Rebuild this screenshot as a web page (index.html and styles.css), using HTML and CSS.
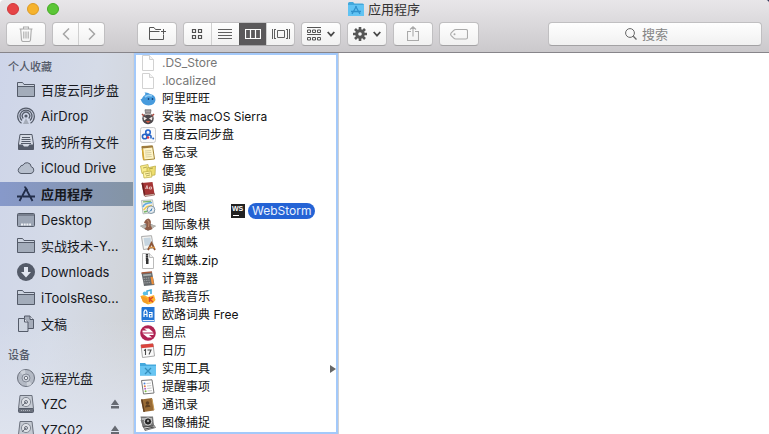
FILE: index.html
```html
<!DOCTYPE html>
<html lang="zh-CN">
<head>
<meta charset="utf-8">
<title>应用程序</title>
<link rel="stylesheet" href="styles.css">
</head>
<body>
<svg class="symbols" aria-hidden="true">
  <symbol id="folder" viewBox="0 0 18 16"><path d="M.5 14.500V.5H5.500L7 2.500H17.500V14.500Z" fill="#a3acba" stroke="#545b69"/><path d="M1 1H5.300L6.800 3H17V4H1Z" fill="#ccd3df"/><path d="M.5 4.500H17.500" stroke="#545b69"/></symbol>
  <symbol id="drive" viewBox="0 0 18 18"><path d="M3 .5H15L16.500 13.500H1.500Z" fill="#c5cad3" stroke="#6b717d"/><circle cx="9" cy="7" r="4.600" fill="#dde0e6" stroke="#848a95"/><circle cx="9" cy="7" r="1.500" fill="none" stroke="#6b717d"/><path d="M9 7L5 11" stroke="#6b717d"/><rect x="1.500" y="13.500" width="15" height="4" rx="1" fill="#6b717d" stroke="#545b69"/><path d="M4 15.500H14" stroke="#aeb3bd" stroke-dasharray="1 1"/></symbol>
  <symbol id="eject" viewBox="0 0 8 10"><path d="M4 .5L8 6H0ZM0 7H8V9.500H0Z" fill="#666a72"/></symbol>
  <symbol id="page" viewBox="0 0 16 16"><path d="M2.500 .5H9.500L13.500 4.500V15.500H2.500Z" fill="#fff" stroke="#d2d2d2"/><path d="M9.500 .5V4.500H13.500" fill="#f4f4f4" stroke="#d2d2d2"/></symbol>
  <symbol id="chevron" viewBox="0 0 8 6"><path d="M.7 1L4 4.600L7.300 1" fill="none" stroke="#4a4a4a" stroke-width="1.800"/></symbol>
</svg>
<div class="window">
  <header class="toolbar">
    <div class="titlebar">
      <div class="lights">
        <button class="light close" aria-label="关闭"></button>
        <button class="light minimize" aria-label="最小化"></button>
        <button class="light expand" aria-label="缩放"></button>
      </div>
      <h1 class="title">
        <svg width="16" height="14" viewBox="0 0 16 14"><path d="M0 1.500Q0 0 1.500 0H5L6.500 1.500H14.500Q16 1.500 16 3V14H0Z" fill="#42a8dc"/><rect y="3" width="16" height="11" fill="#61c3f3"/><path d="M4 12L8.500 4M7.500 4L12 12M3 9.500H13" fill="none" stroke="#2f91cc" stroke-width="1.300"/></svg>
        应用程序
      </h1>
    </div>
    <div class="tools">
      <button class="tool" aria-label="删除"><svg width="14" height="16" viewBox="0 0 14 16"><path d="M.5 3H13.500M4.500 3V1H9.500V3M1.700 3L2.500 14Q2.700 15.500 4.200 15.500H9.800Q11.300 15.500 11.500 14L12.300 3M4.800 5.500V12.500M7 5.500V12.500M9.200 5.500V12.500" fill="none" stroke="#aaa" stroke-width="1.100"/></svg></button>
      <div class="group nav">
        <button class="segment" aria-label="后退"><svg width="8" height="12" viewBox="0 0 8 12"><path d="M7 .5L1.500 6L7 11.500" fill="none" stroke="#a5a5a5" stroke-width="1.500"/></svg></button>
        <button class="segment" aria-label="前进"><svg width="8" height="12" viewBox="0 0 8 12"><path d="M1 .5L6.500 6L1 11.500" fill="none" stroke="#a5a5a5" stroke-width="1.500"/></svg></button>
      </div>
      <button class="tool new-folder" aria-label="新建文件夹"><svg width="18" height="14" viewBox="0 0 18 14"><path d="M13 2.500H7.500L6 .5H1.500V12.500H15.500V8M1.500 4.500H11.500M15.500 2V7.500M13 4.500H18" fill="none" stroke="#555"/></svg></button>
      <div class="group views">
        <button class="segment" aria-label="图标"><svg width="12" height="12" viewBox="0 0 12 12"><path d="M1.500 1.500H4.500V4.500H1.500ZM7.500 1.500H10.500V4.500H7.500ZM1.500 7.500H4.500V10.500H1.500ZM7.500 7.500H10.500V10.500H7.500Z" fill="none" stroke="#505050" stroke-width="1.200"/></svg></button>
        <button class="segment" aria-label="列表"><svg width="14" height="12" viewBox="0 0 14 12"><path d="M0 1.500H14M0 4.500H14M0 7.500H14M0 10.500H14" stroke="#606060"/></svg></button>
        <button class="segment active" aria-label="分栏" aria-pressed="true"><svg width="16" height="12" viewBox="0 0 16 12"><path d="M.5 1.500H15.500V10.500H.5ZM5.500 1.500V10.500M10.500 1.500V10.500" fill="none" stroke="#fff" stroke-width="1.200"/></svg></button>
        <button class="segment" aria-label="封面"><svg width="18" height="12" viewBox="0 0 18 12"><path d="M.5 1V11M2.500 1V11M5.500 2.500H12.500V9.500H5.500ZM15.500 1V11M17.500 1V11M2.500 1.500H4M2.500 10.500H4M14 1.500H15.500M14 10.500H15.500" fill="none" stroke="#606060"/></svg></button>
      </div>
      <button class="tool menu" aria-label="排列"><svg width="14" height="14" viewBox="0 0 14 14"><path d="M0 .5H14M0 7.500H14M.5 3H3.500V5.500H.5ZM5.500 3H8.500V5.500H5.500ZM10.500 3H13.500V5.500H10.500ZM.5 10.500H3.500V13H.5ZM5.500 10.500H8.500V13H5.500ZM10.500 10.500H13.500V13H10.500Z" fill="none" stroke="#555"/></svg><svg width="8" height="6"><use href="#chevron"/></svg></button>
      <button class="tool menu" aria-label="操作"><svg width="14" height="14" viewBox="0 0 14 14"><path d="M7 0V14M0 7H14M2 2L12 12M12 2L2 12" stroke="#565656" stroke-width="2.600"/><circle cx="7" cy="7" r="4.800" fill="#565656"/><circle cx="7" cy="7" r="1.800" fill="#f7f7f7"/></svg><svg width="8" height="6"><use href="#chevron"/></svg></button>
      <button class="tool" aria-label="共享"><svg width="12" height="16" viewBox="0 0 12 16"><path d="M4 5.500H.5V14.500H11.500V5.500H8M6 10.500V1M3 3.500L6 .8L9 3.500" fill="none" stroke="#aaa" stroke-width="1.100"/></svg></button>
      <button class="tool" aria-label="标记"><svg width="18" height="12" viewBox="0 0 18 12"><path d="M6 1.500H16Q17.500 1.500 17.500 3V9.500Q17.500 11 16 11H6Q4.500 11 3.500 9.800L1 7.300Q.3 6.300 1 5.200L3.500 2.700Q4.500 1.500 6 1.500Z" fill="none" stroke="#aaa" stroke-width="1.100"/><circle cx="4.500" cy="6.200" r="1" fill="#aaa"/></svg></button>
      <label class="search">
        <svg width="12" height="12" viewBox="0 0 12 12"><circle cx="5" cy="5" r="4.400" fill="none" stroke="#666"/><path d="M8.300 8.300L11.500 11.500" stroke="#666" stroke-width="1.300"/></svg>
        <input type="search" placeholder="搜索" aria-label="搜索">
      </label>
    </div>
  </header>
  <div class="content">
    <nav class="sidebar">
      <h2>个人收藏</h2>
      <a href="#"><svg width="18" height="16"><use href="#folder"/></svg><span>百度云同步盘</span></a>
      <a href="#"><svg width="18" height="18" viewBox="0 0 18 18"><g fill="none" stroke="#545b69" stroke-width="1.300"><path d="M4.500 16.300A8.300 8.300 0 1 1 13.500 16.300"/><path d="M5 13.500A6 6 0 1 1 13 13.500"/><path d="M6.300 11.500A3.700 3.700 0 1 1 11.700 11.500"/></g><circle cx="9" cy="9" r="1.600" fill="#545b69"/><path d="M9 11L12 17H6Z" fill="#a5acb9"/></svg><span>AirDrop</span></a>
      <a href="#"><svg width="18" height="16" viewBox="0 0 18 16"><path d="M3 .5H15L16.500 10V15.500H1.500V10Z" fill="#d5dae4" stroke="#545b69"/><path d="M5 3.500H13M4.500 5.500H13.500M4.500 7.500H13.500M4 9.500H14" stroke="#545b69"/><path d="M1.500 10.500H5.500L7 12.500H11L12.500 10.500H16.500V15.500H1.500Z" fill="#545b69"/></svg><span>我的所有文件</span></a>
      <a href="#"><svg width="18" height="14" viewBox="0 0 18 14"><path d="M4 12.500A3.300 3.300 0 0 1 3.200 6.200A2.500 2.500 0 0 1 6 4.200A4.300 4.300 0 0 1 14.200 5.700A3.500 3.500 0 0 1 14 12.500Z" fill="#b7bfcd" stroke="#545b69"/></svg><span>iCloud Drive</span></a>
      <a href="#" class="selected" aria-current="page"><svg width="18" height="16" viewBox="0 0 18 16"><path d="M2.500 15L9.500 2M8.500 2L15.500 15M0 10.500H4M6 10.500H18" fill="none" stroke="#222d49" stroke-width="1.800"/><path d="M7.500 .5L10.500 4.500" stroke="#222d49" stroke-width="1.500"/></svg><span>应用程序</span></a>
      <a href="#"><svg width="18" height="16" viewBox="0 0 18 16"><rect x=".5" y="1.500" width="17" height="13" rx="1" fill="#9ca5b4" stroke="#545b69"/><path d="M1 3H17" stroke="#545b69"/><path d="M4 12.500H14" stroke="#eef1f6" stroke-width="2" stroke-dasharray="2 .7"/></svg><span>Desktop</span></a>
      <a href="#"><svg width="18" height="16"><use href="#folder"/></svg><span>实战技术-Y...</span></a>
      <a href="#"><svg width="18" height="18" viewBox="0 0 18 18"><circle cx="9" cy="9" r="9" fill="#545b69"/><path d="M7 4H11V9H14L9 14.500L4 9H7Z" fill="#e2e7f1"/></svg><span>Downloads</span></a>
      <a href="#"><svg width="18" height="16"><use href="#folder"/></svg><span>iToolsReso...</span></a>
      <a href="#"><svg width="18" height="18" viewBox="0 0 18 18"><path d="M7.500 1H13L16.500 4.500V13.500H7.500Z" fill="#a6adba" stroke="#545b69"/><path d="M13 1V4.500H16.500" fill="#d9deea" stroke="#545b69"/><path d="M1.500 3.500H7.500L11 7V16.500H1.500Z" fill="#ccd3df" stroke="#545b69"/><path d="M7.500 3.500V7H11" fill="#e5e9f1" stroke="#545b69"/></svg><span>文稿</span></a>
      <h2>设备</h2>
      <a href="#"><svg width="18" height="18" viewBox="0 0 18 18"><circle cx="9" cy="9" r="8.500" fill="#b4bac5" stroke="#6b717d"/><path d="M9 9L3 3A8 8 0 0 1 8 1ZM9 9L15 15A8 8 0 0 1 10 17Z" fill="#cdd2da"/><circle cx="9" cy="9" r="4" fill="#cbd0d9" stroke="#858b97"/><circle cx="9" cy="9" r="1.700" fill="#eef0f4" stroke="#6b717d"/></svg><span>远程光盘</span></a>
      <a href="#"><svg width="18" height="18"><use href="#drive"/></svg><span>YZC</span><svg class="eject" width="8" height="10"><use href="#eject"/></svg></a>
      <a href="#"><svg width="18" height="18"><use href="#drive"/></svg><span>YZC02</span><svg class="eject" width="8" height="10"><use href="#eject"/></svg></a>
    </nav>
    <main class="browser">
      <ul class="column">
        <li class="hidden-file"><svg class="icon"><use href="#page"/></svg>.DS_Store</li>
        <li class="hidden-file"><svg class="icon"><use href="#page"/></svg>.localized</li>
        <li><svg class="icon" viewBox="0 0 16 16"><path d="M5 4Q6 2.500 4.500 1.500Q8 1 10 3Q15.500 4 15.500 9Q15 14 8.500 14.500Q2.500 14.500 .5 8Q2 8.500 2.500 6.500Q3.500 4.500 5 4Z" fill="#479bdd"/><path d="M5 6Q8 3.500 12 5" stroke="#93cdf4" stroke-width="1.800" fill="none"/><path d="M8.500 7V9M12.500 7V9" stroke="#174a83" stroke-width="1.400"/></svg>阿里旺旺</li>
        <li><svg class="icon" viewBox="0 0 16 16"><circle cx="8" cy="9.500" r="5.700" fill="#4c474b"/><path d="M5 .8H11L10.500 4H5.500Z" fill="#aaa2a3" stroke="#666" stroke-width=".7"/><path d="M4.500 6Q8 4 11.500 6" stroke="#c7bdba" stroke-width="1.400" fill="none"/><path d="M3.500 7.500L7 9.500L4 11.500ZM12.500 7.500L9 9.500L12 11.500Z" fill="#f0e8e4"/><path d="M5.500 12H10.500L8 14Z" fill="#d65b43"/><path d="M2 5L4 7M14 5L12 7" stroke="#a84c42" stroke-width="1.500"/></svg>安装 macOS Sierra</li>
        <li><svg class="icon" viewBox="0 0 16 16"><rect x=".5" y=".5" width="15" height="15" rx="2" fill="#fafafa" stroke="#ccc"/><circle cx="4.700" cy="9.500" r="2.300" fill="none" stroke="#2464c5" stroke-width="1.600"/><circle cx="8" cy="5.300" r="2.300" fill="none" stroke="#2868ce" stroke-width="1.600"/><path d="M7 9Q9 7 11 9V11.500" fill="none" stroke="#2464c5" stroke-width="1.600"/><circle cx="8" cy="10.500" r="1.300" fill="#d9364c"/><circle cx="13.200" cy="11.500" r="1" fill="#2464c5"/></svg>百度云同步盘</li>
        <li><svg class="icon" viewBox="0 0 16 16"><path d="M2 1.500L12.500 1L14.500 14L3.500 15Z" fill="#fff5c8" stroke="#a18434"/><path d="M1.500 1.500L12.500 .5V2.500L2 3.500Z" fill="#9d793d"/><path d="M5 6L11 5.500M5 8L11.300 7.500M5.300 10L11.500 9.500M5.500 12L11.700 11.500" stroke="#c5bd91" stroke-width=".7"/><path d="M2.500 4L3.800 15" stroke="#d6a832" stroke-width="1.500"/></svg>备忘录</li>
        <li><svg class="icon" viewBox="0 0 16 16"><path d="M.5 3L8 1.500L9 9L2 10.500Z" fill="#f9ec8c" stroke="#b9a942" stroke-width=".7"/><path d="M7 5L15.500 3L15 12L7 13Z" fill="#eddd6d" stroke="#b9a942" stroke-width=".7"/><path d="M3 9L11 8L12 14L4 15Z" fill="#fff3a2" stroke="#b9a942" stroke-width=".7"/><path d="M3 5L7 4M9 6L13 5M5 11L10 10M6 13L10 12" stroke="#877b36" stroke-width=".6"/></svg>便笺</li>
        <li><svg class="icon" viewBox="0 0 16 16"><path d="M1.500 2L12.500 1L14.500 13L4 14.500Z" fill="#a53535"/><path d="M1.500 2L3 1.500L5.500 14.500H4Z" fill="#692222"/><path d="M4 14L14.500 12.700V14L5 15.500Z" fill="#eee4d3" stroke="#763030" stroke-width=".6"/><path d="M5.500 8L7 4.500L8 8M6 7H8M9.500 6H11.500V8H9.500Z" fill="none" stroke="#e5c6c2" stroke-width=".9"/></svg>词典</li>
        <li><svg class="icon" viewBox="0 0 16 16"><path d="M1.500 1.500L12.500 .8L14.500 13.500L3 14.800Z" fill="#f1efe6" stroke="#a7b1b3" stroke-width=".8"/><path d="M3 8Q4 4 12 3.500" fill="none" stroke="#61aae4" stroke-width="1.700"/><path d="M3 2.800L11 2.300" stroke="#7db86d" stroke-width="1.300"/><path d="M3.500 11L7 7.500L12 6.500" fill="none" stroke="#f3c945" stroke-width="1.300"/><path d="M4 13L8 12" stroke="#76b768" stroke-width="1.700"/><circle cx="11" cy="10.700" r="3.800" fill="#e9edf0" stroke="#8297a6"/><path d="M9 13L12.500 8.500L11.800 11.500Z" fill="#3379b5"/></svg>地图</li>
        <li><svg class="icon" viewBox="0 0 16 16"><path d="M0 9L8 6L16 9L8 14Z" fill="#858a8d"/><path d="M0 9L4 7.500L8 10L4 11.500ZM8 10L12 7.500L16 9L12 11.500Z" fill="#b9b7b0"/><path d="M4.500 12Q7 10 6.500 7L4 6Q5 2 8.500 1.500Q12 3 10.500 8L12.500 12Q8 14.500 4.500 12Z" fill="#905d48"/><path d="M7.500 3Q10 5 8.500 10" stroke="#c28e70" fill="none"/></svg>国际象棋</li>
        <li><svg class="icon" viewBox="0 0 16 16"><path d="M1.500 1.500L11.500 .7L13.500 13L3.500 14.500Z" fill="#f5f5f2" stroke="#aaa"/><path d="M3.500 3L10.500 2.500L11.500 10L4.800 11Z" fill="#c6d5e0"/><path d="M8 15L11.500 8L15 15" fill="none" stroke="#8b5436" stroke-width="1.800"/><path d="M9 12.500H15" stroke="#d69046" stroke-width="1.500"/></svg>红蜘蛛</li>
        <li><svg class="icon" viewBox="0 0 16 16"><path d="M2.500 .5H9.500L13.500 4.500V15.500H2.500Z" fill="#fff" stroke="#bbb"/><path d="M9.500 .5V4.500H13.500" fill="#eee" stroke="#bbb"/><path d="M7 1V8" stroke="#333" stroke-width="2.400" stroke-dasharray="1.400 .4"/><rect x="6" y="6" width="2.500" height="5" fill="#333"/></svg>红蜘蛛.zip</li>
        <li><svg class="icon" viewBox="0 0 16 16"><path d="M1.500 2L12 1L14.500 14L4 15Z" fill="#65696c"/><path d="M3 3.500L11 2.700L11.400 4.500L3.300 5.300Z" fill="#a7afae"/><path d="M3.500 7.500L9.500 6.900M3.800 9.700L10 9.100M4.200 12L10.300 11.400" stroke="#96999b" stroke-width="1.200" stroke-dasharray="1.500 .7"/><path d="M10.500 6L12.800 5.800L14 13.200H11.800Z" fill="#ef913c"/><path d="M1.500 2L12 1" stroke="#a65b3d" stroke-width="1.500"/></svg>计算器</li>
        <li><svg class="icon" viewBox="0 0 16 16"><path d="M.5 7L4 6L8 8L14 6L15.500 11L13 14L8 15.500L3 13Z" fill="#ffb42e"/><path d="M.5 7L7 9L8 15L3 13Z" fill="#f59d24"/><path d="M7 6V2L11 1V5" fill="none" stroke="#45acd9" stroke-width="1.600"/><circle cx="4.800" cy="4.500" r="2" fill="#58bfe6"/><path d="M9.500 8V13M13 8L10 10.500L13 13" fill="none" stroke="#d9482c" stroke-width="1.500"/></svg>酷我音乐</li>
        <li><svg class="icon" viewBox="0 0 16 16"><path d="M2 0H14.500V15H2.500L1.500 13V1Z" fill="#2375d5"/><path d="M2.500 13H14V14.300H3Z" fill="#e7effa"/><path d="M4 10V5L5 3H6L7 5V10M4 7.500H7M9 5.500H12V10H9.500V7.500H12" fill="none" stroke="#fff" stroke-width="1.200"/></svg>欧路词典 Free</li>
        <li><svg class="icon" viewBox="0 0 16 16"><circle cx="8" cy="8" r="7.800" fill="#b02252"/><path d="M4 3.500H9L13.500 7.500H2.500V5.500H7ZM2.500 8.500H13.500V10H9L12 12.500H7.500Z" fill="#fff"/></svg>圈点</li>
        <li><svg class="icon" viewBox="0 0 16 16"><path d="M1 2L13 1L14.500 13L2.500 14.500Z" fill="#fafafa" stroke="#aaa"/><path d="M.8 1.800L13 .5L13.700 4L1.300 5.300Z" fill="#da443d"/><path d="M4 7.500L5.500 6.500V12M7.500 7H11L9 11.500" fill="none" stroke="#4b4b4b" stroke-width="1.100"/></svg>日历</li>
        <li class="folder"><svg class="icon" viewBox="0 0 16 16"><path d="M0 2H5L6.500 3.500H16V14.500H0Z" fill="#45a9dd"/><path d="M0 5H16V14.500H0Z" fill="#68c5f2"/><path d="M5 7L11 13M11 7L5 13" stroke="#348fbe" stroke-width="1.300"/></svg>实用工具<svg class="disclosure" width="6" height="8" viewBox="0 0 6 8"><path d="M0 0L6 4L0 8Z" fill="#666"/></svg></li>
        <li><svg class="icon" viewBox="0 0 16 16"><path d="M1.500 1.500L12 .8L14 14L3.500 15Z" fill="#fff" stroke="#777"/><path d="M6.500 4.500L11 4M7 7L11.300 6.600M7.200 9.500L11.600 9M7.500 12L12 11.600" stroke="#bbb" stroke-width=".8"/><circle cx="4.500" cy="4.500" r="1" fill="#4f83d7"/><circle cx="4.800" cy="7.200" r="1" fill="#e2793d"/><circle cx="5.200" cy="9.800" r="1" fill="#b161c1"/><circle cx="5.600" cy="12.200" r="1" fill="#7aba43"/></svg>提醒事项</li>
        <li><svg class="icon" viewBox="0 0 16 16"><path d="M1 2.500L12 1L14 13.500L3.500 15Z" fill="#996b35"/><path d="M1 2.500L2.500 2.300L4.800 14.800L3.500 15Z" fill="#5d3d20"/><circle cx="7.500" cy="6" r="1.800" fill="#5f4021"/><path d="M5 10.500Q5.500 7.500 7.500 7.500Q10 7.500 10.500 9.800Z" fill="#5f4021"/><path d="M12 2L14 13" stroke="#c69a55"/></svg>通讯录</li>
        <li><svg class="icon" viewBox="0 0 16 16"><path d="M1 5L11 6L15.500 12.500L5 15.500Z" fill="#ddd" stroke="#777"/><path d="M.5 1.500H13L14 11L2.500 12Z" fill="#777"/><path d="M1.500 3H12V5H2Z" fill="#b8b8b8"/><circle cx="8" cy="6.500" r="3.700" fill="#252525" stroke="#ddd"/><circle cx="8" cy="6" r="1.200" fill="#999"/><path d="M3 12L13 11M5 14L14 12" stroke="#444"/></svg>图像捕捉</li>
      </ul>
      <div class="drag-item"><svg width="14" height="14" viewBox="0 0 14 14"><rect width="14" height="14" fill="#222"/><text x="1" y="7" class="logo-text">WS</text><path d="M2 11.500H8" stroke="#fff"/></svg><span>WebStorm</span></div>
      <div class="preview"></div>
    </main>
  </div>
</div>
</body>
</html>
```
FILE: styles.css
```css
* {
  box-sizing: border-box;
}

body {
  margin: 0;
  overflow: hidden;
  background: linear-gradient(90deg, #fff 50%, #34385c 50%);
  color: #111;
  font: 13px/18px Inter, "Noto Sans CJK SC", sans-serif;
}

button,
input {
  font: inherit;
}

h1,
h2,
ul {
  margin: 0;
  padding: 0;
}

svg {
  display: block;
  flex: none;
}

.symbols {
  display: none;
}

.window {
  display: flex;
  flex-direction: column;
  height: 100vh;
  overflow: hidden;
  border-radius: 4px 4px 0 0;
  background: #fff;
}

.toolbar {
  flex: none;
  border-bottom: 1px solid #87858a;
  background: linear-gradient(#e8e6e9, #cbc9cc);
}

.titlebar {
  display: grid;
  grid-template-columns: 1fr auto 1fr;
  align-items: center;
  height: 22px;
  padding: 0 8px 4px 7px;
}

.lights {
  display: flex;
  gap: 8px;
}

.light {
  width: 12px;
  height: 12px;
  padding: 0;
  border: 1px solid;
  border-radius: 50%;
}

.close {
  border-color: #d0373a;
  background: #e64446;
}

.minimize {
  border-color: #dc9a25;
  background: #f6b32d;
}

.expand {
  border-color: #45ab25;
  background: #5cc637;
}

.title {
  display: flex;
  align-items: center;
  gap: 4px;
  color: #333;
  font-size: 13px;
  font-weight: 400;
}

.tools {
  display: flex;
  gap: 6px;
  padding: 0 7px 6px 6px;
}

.tool,
.group,
.search {
  height: 24px;
  border: 1px solid #c0bfc1;
  border-bottom-color: #a3a2a4;
  border-radius: 4px;
  background: linear-gradient(#fefefe, #f1f1f1);
}

.tool {
  display: flex;
  align-items: center;
  justify-content: center;
  width: 40px;
  padding: 0;
}

.menu {
  gap: 6px;
}

.group {
  display: flex;
  overflow: hidden;
}

.nav {
  width: 53px;
}

.views {
  width: 112px;
}

.new-folder {
  margin-left: 26px;
}

.segment {
  display: flex;
  flex: 1;
  align-items: center;
  justify-content: center;
  padding: 0;
  border: 0;
  background: none;
}

.segment + .segment {
  border-left: 1px solid #d0d0d0;
}

.segment.active {
  border-color: #555;
  background: #5b595b;
}

.search {
  display: flex;
  align-items: center;
  gap: 5px;
  width: 214px;
  margin-left: auto;
  padding-left: 76px;
}

.search input {
  flex: 1;
  min-width: 0;
  padding: 0;
  border: 0;
  outline: 0;
  background: none;
}

.search input::placeholder {
  color: #858585;
}

.content {
  display: flex;
  flex: 1;
  min-height: 0;
}

.sidebar {
  flex: none;
  width: 133px;
  overflow: hidden;
  background: linear-gradient(rgba(222, 227, 238, 0) 70%, #dee3ee), linear-gradient(100deg, #ced5e9, #d5dbe7 50%, #cfd1d3);
}

.sidebar h2 {
  padding: 5px 8px 2px;
  color: #545a68;
  font-size: 11px;
  font-weight: 500;
}

.sidebar a + h2 {
  padding-top: 8px;
}

.sidebar a {
  display: flex;
  align-items: center;
  gap: 6px;
  height: 24px;
  margin-bottom: 2px;
  padding: 0 14px 0 17px;
  color: #16181d;
  text-decoration: none;
  white-space: nowrap;
}

.sidebar .selected {
  background: linear-gradient(90deg, #8799ca, #8494a4);
  font-weight: 700;
}

.eject {
  margin-left: auto;
}

.browser {
  position: relative;
  display: flex;
  flex: 1;
  min-width: 0;
}

.column {
  flex: none;
  width: 206px;
  padding-top: 1px;
  overflow: hidden;
  border: solid #d0d1d4;
  border-width: 0 1px;
  box-shadow: inset 0 0 0 2px #a3c9fa;
  font-size: 12px;
  list-style: none;
}

.column li {
  display: flex;
  align-items: center;
  gap: 6px;
  height: 18px;
  padding: 0 2px 0 6px;
  white-space: nowrap;
}

.icon {
  width: 16px;
  height: 16px;
}

.column .hidden-file {
  color: #777;
}

.disclosure {
  margin-left: auto;
}

.drag-item {
  position: absolute;
  top: 150px;
  left: 98px;
  display: flex;
  align-items: center;
  gap: 3px;
  font-size: 12px;
  line-height: 16px;
}

.drag-item span {
  padding: 0 4px;
  border-radius: 8px;
  background: #2463d5;
  color: #e9f1ff;
}

.logo-text {
  fill: #fff;
  font: 700 7px "Liberation Sans", sans-serif;
}

.preview {
  flex: 1;
}
```
